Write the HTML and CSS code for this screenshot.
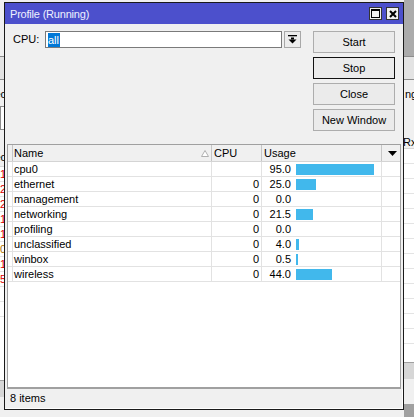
FILE: index.html
```html
<!DOCTYPE html>
<html>
<head>
<meta charset="utf-8">
<title>Profile (Running)</title>
<link rel="stylesheet" href="styles.css">
</head>
<body>
<div class="desk">
  <div class="strip strip-left">
    <div class="bg-top-light"></div>
    <div class="bg-line"></div>
    <div class="bg-tool"></div>
    <div class="bg-line"></div>
    <div class="bg-form"><span class="bg-text">Spec</span></div>
    <div class="bg-box"></div>
    <div class="bg-gap"></div>
    <div class="bg-head"><span class="bg-text">Spec</span></div>
    <div class="bg-list">
      <div class="bg-row"><span class="bg-red">1</span></div>
      <div class="bg-row"><span class="bg-red">2</span></div>
      <div class="bg-row"><span class="bg-red">2</span></div>
      <div class="bg-row"><span class="bg-red">1</span></div>
      <div class="bg-row"><span class="bg-red">1</span></div>
      <div class="bg-row"><span class="bg-brown">0</span></div>
      <div class="bg-row"><span class="bg-red">1</span></div>
      <div class="bg-row"><span class="bg-red">5</span></div>
      <div class="bg-row"></div>
      <div class="bg-row"></div>
    </div>
    <div class="bg-band"></div>
    <div class="bg-foot"></div>
    <div class="bg-dark"></div>
  </div>
  <div class="strip strip-mid"></div>
  <div class="strip strip-right">
    <div class="bg-top-gray"></div>
    <div class="bg-line"></div>
    <div class="bg-tool"></div>
    <div class="bg-line"></div>
    <div class="bg-form bg-form-right"><span class="bg-text-l">ng</span></div>
    <div class="bg-gap-r"></div>
    <div class="bg-head bg-head-right"><span class="bg-text-l rx">Rx</span></div>
    <div class="bg-list">
      <div class="bg-row"></div><div class="bg-row"></div><div class="bg-row"></div>
      <div class="bg-row"></div><div class="bg-row"></div><div class="bg-row"></div>
      <div class="bg-row"></div><div class="bg-row"></div><div class="bg-row"></div>
      <div class="bg-row"></div><div class="bg-row"></div><div class="bg-row"></div>
      <div class="bg-row"></div>
    </div>
    <div class="bg-band"></div>
    <div class="bg-foot"></div>
    <div class="bg-dark"></div>
  </div>
</div>

<div class="window">
  <div class="titlebar">
    <span class="title">Profile (Running)</span>
    <div class="tbtns">
      <span class="tbtn"><svg width="9" height="9" viewBox="0 0 9 9"><rect x="0.5" y="0.5" width="8" height="8" fill="none" stroke="#000"/><rect x="0" y="0" width="9" height="2" fill="#000"/></svg></span>
      <span class="tbtn"><svg width="8" height="8" viewBox="0 0 8 8"><path d="M1 1L7 7M7 1L1 7" stroke="#000" stroke-width="2" fill="none"/></svg></span>
    </div>
  </div>
  <div class="client">
    <div class="top">
      <div class="cpu-row">
        <span class="cpu-label">CPU:</span>
        <div class="input"><span class="sel">all</span></div>
        <div class="combo-btn"><svg width="9" height="9" viewBox="0 0 9 9"><rect x="0" y="0" width="9" height="1.3" fill="#000"/><rect x="3" y="2.5" width="3" height="2" fill="#000"/><polygon points="0.5,4.5 8.5,4.5 4.5,8.5" fill="#000"/></svg></div>
      </div>
      <div class="btns">
        <button class="btn">Start</button>
        <button class="btn btn-focus">Stop</button>
        <button class="btn">Close</button>
        <button class="btn">New Window</button>
      </div>
    </div>
    <div class="table">
      <div class="thead">
        <div class="th th-flag"></div>
        <div class="th th-name"><span>Name</span><svg class="sort" width="8" height="7" viewBox="0 0 8 7"><polygon points="0.5,6.5 7.5,6.5 4,0.5" fill="#fff" stroke="#b0b0b0"/></svg></div>
        <div class="th">CPU</div>
        <div class="th">Usage</div>
        <div class="th th-menu"><svg width="9" height="5" viewBox="0 0 9 5"><polygon points="0,0 9,0 4.5,5" fill="#000"/></svg></div>
      </div>
      <div class="tbody">
        <div class="tr"><div class="td"></div><div class="td td-name">cpu0</div><div class="td td-cpu"></div><div class="td td-usage"><span class="num">95.0</span><span class="bar" style="width:78px"></span></div><div class="td td-last"></div></div>
        <div class="tr"><div class="td"></div><div class="td td-name">ethernet</div><div class="td td-cpu">0</div><div class="td td-usage"><span class="num">25.0</span><span class="bar" style="width:20px"></span></div><div class="td td-last"></div></div>
        <div class="tr"><div class="td"></div><div class="td td-name">management</div><div class="td td-cpu">0</div><div class="td td-usage"><span class="num">0.0</span></div><div class="td td-last"></div></div>
        <div class="tr"><div class="td"></div><div class="td td-name">networking</div><div class="td td-cpu">0</div><div class="td td-usage"><span class="num">21.5</span><span class="bar" style="width:17px"></span></div><div class="td td-last"></div></div>
        <div class="tr"><div class="td"></div><div class="td td-name">profiling</div><div class="td td-cpu">0</div><div class="td td-usage"><span class="num">0.0</span></div><div class="td td-last"></div></div>
        <div class="tr"><div class="td"></div><div class="td td-name">unclassified</div><div class="td td-cpu">0</div><div class="td td-usage"><span class="num">4.0</span><span class="bar" style="width:3px"></span></div><div class="td td-last"></div></div>
        <div class="tr"><div class="td"></div><div class="td td-name">winbox</div><div class="td td-cpu">0</div><div class="td td-usage"><span class="num">0.5</span><span class="bar" style="width:2px"></span></div><div class="td td-last"></div></div>
        <div class="tr"><div class="td"></div><div class="td td-name">wireless</div><div class="td td-cpu">0</div><div class="td td-usage"><span class="num">44.0</span><span class="bar" style="width:36px"></span></div><div class="td td-last"></div></div>
      </div>
    </div>
    <div class="status">8 items</div>
  </div>
</div>
</body>
</html>
```

FILE: styles.css
```css
* { box-sizing: border-box; }

body {
  margin: 0;
  width: 414px;
  height: 417px;
  overflow: hidden;
  position: relative;
  background: #a0a0a0;
  font-family: "Liberation Sans", Arial, sans-serif;
  font-size: 11px;
  color: #000;
}

/* background application (behind the window) */
.desk { display: flex; height: 417px; }
.strip { display: flex; flex-direction: column; overflow: hidden; }
.strip-left { width: 4px; }
.strip-mid { flex: 1; background: #f0f0f0; }
.strip-right { width: 10px; }

.bg-top-light { height: 56px; background: #f0f0f0; flex: none; }
.bg-top-gray { height: 56px; background: #ababab; flex: none; }
.bg-line { height: 1px; background: #8c8c8c; flex: none; }
.bg-tool { height: 22px; background: #e3e3e3; flex: none; }
.bg-form {
  height: 26px; background: #f0f0f0; flex: none;
  display: flex; justify-content: flex-end; padding-top: 8px;
  line-height: 12px; white-space: nowrap;
}
.bg-form-right { justify-content: flex-start; height: 52px; }
.bg-text { margin-right: -2px; }
.bg-text-l { margin-left: 1px; }
.bg-box { height: 24px; background: #fff; border: 1px solid #8c8c8c; border-right: none; flex: none; }
.bg-gap { height: 20px; background: #f0f0f0; flex: none; }
.bg-gap-r { height: 0; flex: none; }
.bg-head {
  height: 17px; background: #f0f0f0; border-bottom: 1px solid #d6d6d6; flex: none;
  display: flex; justify-content: flex-end; line-height: 15px; white-space: nowrap;
}
.bg-head-right { justify-content: flex-start; border-left: 0; padding-top: 3px; }
.rx { margin-left: -1px; }
.bg-list { height: 213px; background: #fff; flex: none; overflow: hidden; }
.bg-row {
  height: 15px; border-bottom: 1px solid #e4e4e4;
  display: flex; justify-content: flex-end; line-height: 14px;
}
.bg-red { color: #e00000; margin-right: -2px; }
.bg-brown { color: #b07000; margin-right: -2px; }
.bg-band { height: 17px; background: #d6d6d6; border-top: 1px solid #a0a0a0; flex: none; }
.bg-foot { height: 25px; background: #f0f0f0; flex: none; }
.bg-dark { flex: 1; background: #a0a0a0; }

/* window */
.window {
  position: absolute;
  left: 4px;
  top: 2px;
  width: 400px;
  height: 408px;
  border: 1px solid #1a1a1a;
  background: #f0f0f0;
  display: flex;
  flex-direction: column;
}

.titlebar {
  height: 21px;
  flex: none;
  background: #4c50cc;
  display: flex;
  align-items: center;
  justify-content: space-between;
  padding: 0 4px 0 5px;
}
.title {
  color: #eef0ff;
  font-size: 11px;
  letter-spacing: -0.2px;
  line-height: 14px;
  padding-top: 1px;
}
.tbtns { display: flex; gap: 4px; }
.tbtn {
  width: 13px;
  height: 13px;
  background: #f0f0f0;
  border: 1px solid #333;
  display: flex;
  align-items: center;
  justify-content: center;
}
.tbtn svg { display: block; }

.client { flex: 1; display: flex; flex-direction: column; }

.top {
  height: 120px;
  flex: none;
  display: flex;
  justify-content: space-between;
  padding: 7px 8px 0 8px;
}
.cpu-row { display: flex; align-items: flex-start; }
.cpu-label { width: 32px; height: 17px; line-height: 17px; }
.input {
  width: 237px;
  height: 17px;
  background: #fff;
  border: 1px solid #7a7a7a;
  padding: 1px 0 0 2px;
}
.sel {
  display: inline-block;
  height: 14px;
  line-height: 14px;
  padding: 0 1px 0 0;
  background: #0078d7;
  color: #fff;
}
.combo-btn {
  width: 17px;
  height: 17px;
  margin-left: 2px;
  background: #ececec;
  border: 1px solid #a8a8a8;
  display: flex;
  align-items: center;
  justify-content: center;
}
.combo-btn svg { display: block; }

.btns { display: flex; flex-direction: column; gap: 4px; }
.btn {
  width: 82px;
  height: 22px;
  margin: 0;
  padding: 0;
  background: #ebebeb;
  border: 1px solid #adadad;
  font-family: "Liberation Sans", Arial, sans-serif;
  font-size: 11px;
  color: #000;
  line-height: 20px;
}
.btn-focus { border-color: #111; }

/* table */
.table {
  height: 245px;
  flex: none;
  margin: 0 2px;
  background: #fff;
  border: 1px solid #a0a0a0;
  border-bottom: 2px solid #a0a0a0;
  display: flex;
  flex-direction: column;
}
.thead, .tr {
  display: grid;
  grid-template-columns: 5px 199px 50px 120px 1fr;
}
.thead {
  height: 17px;
  background: #f0f0f0;
  border-bottom: 1px solid #d4d4d4;
}
.th {
  border-right: 1px solid #c6c6c6;
  line-height: 16px;
  padding-left: 2px;
  white-space: nowrap;
}
.th-flag { padding: 0; }
.th-name {
  padding-left: 1px;
  display: flex;
  justify-content: space-between;
  align-items: center;
  padding-right: 2px;
}
.sort { display: block; }
.th-menu {
  border-right: none;
  padding: 0;
  display: flex;
  align-items: center;
  justify-content: center;
}
.th-menu svg { display: block; margin-left: 2px; }

.tr { height: 15px; border-bottom: 1px solid #e2e2e2; }
.td {
  border-right: 1px solid #e2e2e2;
  line-height: 14px;
  white-space: nowrap;
  overflow: hidden;
}
.td-name { padding-left: 1px; }
.td-cpu { text-align: right; padding-right: 2px; }
.td-usage { display: flex; align-items: center; }
.td-last { border-right: none; }
.num { width: 29px; text-align: right; flex: none; }
.bar { height: 11px; margin-left: 5px; background: #41b8ec; flex: none; }

.status {
  flex: 1;
  display: flex;
  align-items: center;
  padding-left: 5px;
  padding-bottom: 2px;
  box-shadow: inset -1px -1px 0 #ffffff;
}
```
